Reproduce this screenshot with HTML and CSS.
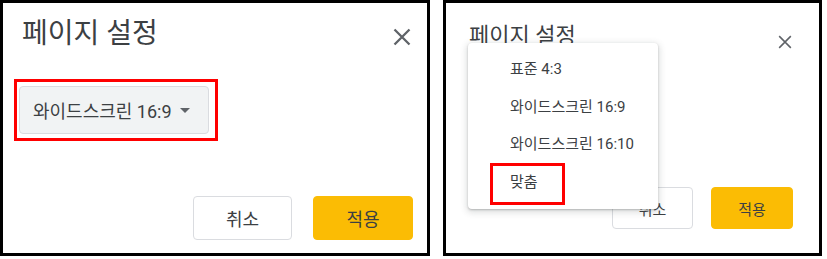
FILE: index.html
```html
<!DOCTYPE html>
<html lang="ko">
<head>
<meta charset="utf-8">
<title>페이지 설정</title>
<link rel="stylesheet" href="styles.css">
</head>
<body>
<div class="shots">
  <section class="panel panel-left">
    <div class="head">
      <h1 class="title">페이지 설정</h1>
      <svg class="close" viewBox="0 0 18 18" aria-label="닫기"><path d="M1.5 1.5L16.5 16.5M16.5 1.5L1.5 16.5" /></svg>
    </div>
    <div class="mark mark-select">
      <div class="select"><span>와이드스크린 16:9</span><i class="caret"></i></div>
    </div>
    <div class="foot">
      <button class="btn btn-cancel">취소</button>
      <button class="btn btn-apply">적용</button>
    </div>
  </section>

  <section class="panel panel-right">
    <div class="head">
      <h1 class="title">페이지 설정</h1>
      <svg class="close" viewBox="0 0 18 18" aria-label="닫기"><path d="M1.5 1.5L16.5 16.5M16.5 1.5L1.5 16.5" /></svg>
    </div>
    <div class="foot">
      <button class="btn btn-cancel">취소</button>
      <button class="btn btn-apply">적용</button>
    </div>
    <ul class="menu">
      <li>표준 4:3</li>
      <li>와이드스크린 16:9</li>
      <li>와이드스크린 16:10</li>
      <li>맞춤</li>
      <span class="mark-item"></span>
    </ul>
  </section>
</div>
</body>
</html>
```

FILE: styles.css
```css
html, body {
  margin: 0;
  padding: 0;
  background: #fff;
}
body {
  font-family: Roboto, "Noto Sans CJK KR", sans-serif;
  color: #3c4043;
}
.shots {
  display: flex;
  gap: 13px;
  height: 259px;
}
.panel {
  box-sizing: border-box;
  height: 256px;
  border: 3px solid #000;
  display: flex;
  flex-direction: column;
  align-items: flex-start;
  position: relative;
  background: #fff;
}
.head {
  display: flex;
  justify-content: space-between;
  align-items: flex-start;
  align-self: stretch;
}
.title {
  margin: 0;
  font-weight: 400;
}
.close {
  fill: none;
  stroke: #5f6368;
  stroke-width: 2.3;
}

/* left panel */
.panel-left {
  width: 430px;
  padding: 13px 14px 13px 11px;
}
.panel-left .title {
  font-size: 28px;
  line-height: 36px;
  margin-left: 8px;
}
.panel-left .close {
  width: 18px;
  height: 18px;
  margin-top: 12px;
  margin-right: 2px;
}
.mark {
  border: 3px solid #ff0000;
}
.mark-select {
  margin-top: 27px;
  padding: 4px 6px 4px 2px;
}
.select {
  box-sizing: border-box;
  width: 190px;
  height: 48px;
  border: 1px solid #dadce0;
  border-radius: 4px;
  background: #f1f3f4;
  display: flex;
  align-items: center;
  padding-left: 13px;
  font-size: 18px;
  color: #3c4043;
}
.caret {
  margin-left: 8px;
  width: 0;
  height: 0;
  border-left: 5px solid transparent;
  border-right: 5px solid transparent;
  border-top: 5px solid #5f6368;
}
.foot {
  margin-top: auto;
  align-self: stretch;
  display: flex;
  justify-content: flex-end;
}
.btn {
  box-sizing: border-box;
  font-family: Roboto, "Noto Sans CJK KR", sans-serif;
  color: #3c4043;
  border-radius: 4px;
  padding: 0;
}
.btn-cancel {
  background: #fff;
  border: 1px solid #dadce0;
}
.btn-apply {
  background: #fbbc04;
  border: 1px solid #fbbc04;
}
.panel-left .btn {
  height: 44px;
  font-size: 18px;
}
.panel-left .btn-cancel { width: 99px; }
.panel-left .btn-apply { width: 100px; margin-left: 21px; }

/* right panel */
.panel-right {
  width: 379px;
  padding: 19px 26px 24px 23px;
}
.panel-right .title {
  font-size: 22px;
  line-height: 28px;
}
.panel-right .close {
  width: 14px;
  height: 14px;
  margin-top: 13px;
  margin-right: 1px;
  stroke-width: 2;
}
.panel-right .btn {
  height: 42px;
  font-size: 15px;
}
.panel-right .btn-cancel { width: 81px; }
.panel-right .btn-apply { width: 82px; margin-left: 18px; }

.menu {
  position: absolute;
  left: 22px;
  top: 40px;
  width: 190px;
  margin: 0;
  padding: 8px 0;
  list-style: none;
  background: #fff;
  border-radius: 4px;
  box-shadow: 0 1px 2px rgba(60, 64, 67, 0.3), 0 2px 6px 2px rgba(60, 64, 67, 0.15);
}
.menu li {
  height: 37.5px;
  line-height: 37.5px;
  padding-left: 42px;
  font-size: 15px;
  color: #3c4043;
}
.mark-item {
  position: absolute;
  left: 22px;
  top: 120px;
  width: 75px;
  height: 42px;
  box-sizing: border-box;
  border: 3px solid #ff0000;
}
```
